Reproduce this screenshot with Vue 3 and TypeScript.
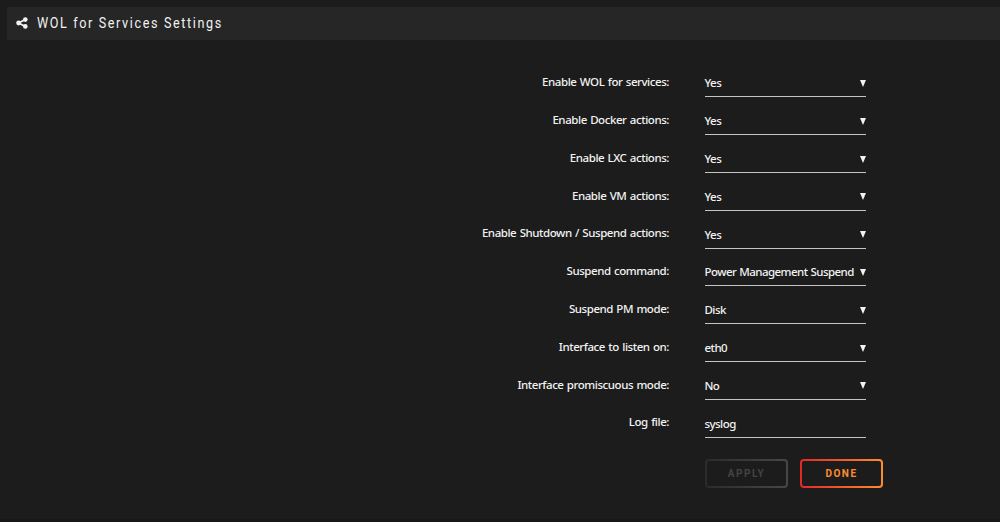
<script setup lang="ts">
interface Field {
  label: string;
  value: string;
  type: 'select' | 'text';
}

const fields: Field[] = [
  { label: 'Enable WOL for services:', value: 'Yes', type: 'select' },
  { label: 'Enable Docker actions:', value: 'Yes', type: 'select' },
  { label: 'Enable LXC actions:', value: 'Yes', type: 'select' },
  { label: 'Enable VM actions:', value: 'Yes', type: 'select' },
  { label: 'Enable Shutdown / Suspend actions:', value: 'Yes', type: 'select' },
  { label: 'Suspend command:', value: 'Power Management Suspend', type: 'select' },
  { label: 'Suspend PM mode:', value: 'Disk', type: 'select' },
  { label: 'Interface to listen on:', value: 'eth0', type: 'select' },
  { label: 'Interface promiscuous mode:', value: 'No', type: 'select' },
  { label: 'Log file:', value: 'syslog', type: 'text' },
];
</script>

<template>
  <main class="page">
    <header class="title">
      <svg class="icon" viewBox="0 0 12 12">
        <path d="M9.3 2.5 2.6 6l6.7 3.5" />
        <circle cx="9.3" cy="2.6" r="2.3" />
        <circle cx="2.6" cy="6" r="2.4" />
        <circle cx="9.3" cy="9.4" r="2.3" />
      </svg>
      <h1>WOL for Services Settings</h1>
    </header>

    <form class="settings" @submit.prevent>
      <div v-for="field in fields" :key="field.label" class="row">
        <span class="label">{{ field.label }}</span>
        <div class="field">
          <span class="value">{{ field.value }}</span>
          <svg v-if="field.type === 'select'" class="arrow" viewBox="0 0 6 7">
            <path d="M0 0h6L3 7z" />
          </svg>
        </div>
      </div>
      <div class="actions">
        <button type="button" class="apply" disabled>Apply</button>
        <button type="button" class="done">Done</button>
      </div>
    </form>
  </main>
</template>

<style>
body {
  background: #1c1b1b;
}
</style>

<style scoped>
.page {
  box-sizing: border-box;
  height: 522px;
  padding-top: 7px;
  overflow: hidden;
  border-bottom: 3px solid #191618;
  background: #1c1c1c;
  color: #f2f2f2;
  font-family: 'Noto Sans', sans-serif;
  font-size: 11.5px;
}

.title {
  display: flex;
  align-items: center;
  height: 33px;
  margin-left: 7px;
  padding-left: 9px;
  background: #262626;
}

.icon {
  width: 12px;
  height: 12px;
  margin-bottom: 2px;
  fill: #f2f2f2;
}

.icon path {
  fill: none;
  stroke: #f2f2f2;
  stroke-width: 1.8;
}

h1 {
  margin: 0 0 1px 9px;
  font-family: Roboto, sans-serif;
  font-size: 14px;
  font-weight: 400;
  letter-spacing: 1.8px;
  line-height: 20px;
  transform: scaleX(0.9);
  transform-origin: left;
}

.settings {
  padding-top: 29.45px;
}

.row {
  display: grid;
  grid-template-columns: 669px 161.5px;
  column-gap: 35.5px;
  height: 37.8px;
}

.label {
  padding-top: 3.8px;
  font-weight: 500;
  letter-spacing: -0.44px;
  line-height: 18px;
  text-align: right;
  white-space: nowrap;
  word-spacing: 0.8px;
}

.field {
  display: flex;
  box-sizing: border-box;
  align-items: center;
  justify-content: space-between;
  height: 28px;
  border-bottom: 1px solid #c4c4c4;
  white-space: nowrap;
}

.value {
  font-weight: 500;
  letter-spacing: -0.55px;
  word-spacing: 0.5px;
}

.arrow {
  flex: none;
  width: 6px;
  height: 7px;
  margin: 1px 0.5px 0 0;
  fill: #f2f2f2;
}

.actions {
  display: flex;
  gap: 12px;
  padding: 11.5px 0 0 705px;
}

button {
  box-sizing: border-box;
  width: 83px;
  height: 29px;
  padding: 0;
  border: 2px solid transparent;
  border-radius: 4px;
  font-family: Roboto, sans-serif;
  font-size: 10px;
  font-weight: 700;
  letter-spacing: 1.5px;
  text-transform: uppercase;
}

.apply {
  background:
    linear-gradient(#1c1c1c, #1c1c1c) padding-box,
    linear-gradient(90deg, #2b2b2b, #474747) border-box;
  color: #444;
}

.done {
  background:
    linear-gradient(#1c1c1c, #1c1c1c) padding-box,
    linear-gradient(90deg, #e22828, #ff8c2f) border-box;
  color: #ff8c2f;
}
</style>
